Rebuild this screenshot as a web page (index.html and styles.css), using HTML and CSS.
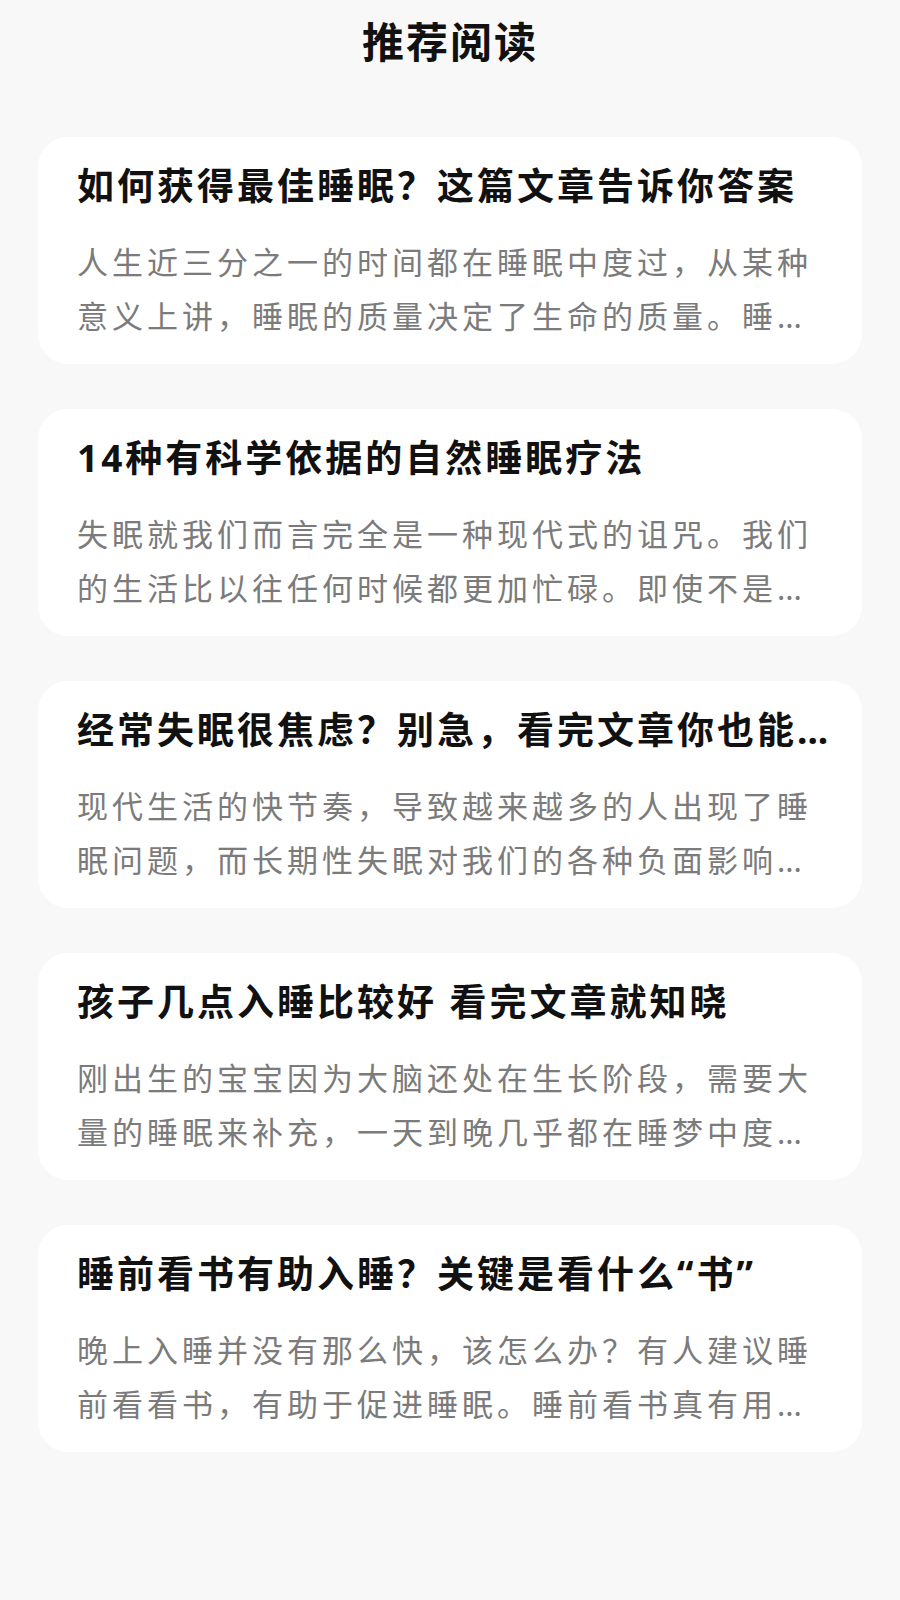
FILE: index.html
```html
<!DOCTYPE html>
<html>
<head>
	<meta charset="utf-8">
	<title>推荐阅读</title>
	<link rel="stylesheet" href="styles.css">
</head>
<body>
	<h1 class="page-title">推荐阅读</h1>
	<div class="article-list">
		<div class="article">
			<div class="article-title">如何获得最佳睡眠？这篇文章告诉你答案</div>
			<div class="article-desc">人生近三分之一的时间都在睡眠中度过，从某种意义上讲，睡眠的质量决定了生命的质量。睡<span class="dots">...</span></div>
		</div>
		<div class="article">
			<div class="article-title">14种有科学依据的自然睡眠疗法</div>
			<div class="article-desc">失眠就我们而言完全是一种现代式的诅咒。我们的生活比以往任何时候都更加忙碌。即使不是<span class="dots">...</span></div>
		</div>
		<div class="article">
			<div class="article-title">经常失眠很焦虑？别急，看完文章你也能<span class="dots">...</span></div>
			<div class="article-desc">现代生活的快节奏，导致越来越多的人出现了睡眠问题，而长期性失眠对我们的各种负面影响<span class="dots">...</span></div>
		</div>
		<div class="article">
			<div class="article-title">孩子几点入睡比较好 看完文章就知晓</div>
			<div class="article-desc">刚出生的宝宝因为大脑还处在生长阶段，需要大量的睡眠来补充，一天到晚几乎都在睡梦中度<span class="dots">...</span></div>
		</div>
		<div class="article">
			<div class="article-title">睡前看书有助入睡？关键是看什么“书”</div>
			<div class="article-desc">晚上入睡并没有那么快，该怎么办？有人建议睡前看看书，有助于促进睡眠。睡前看书真有用<span class="dots">...</span></div>
		</div>
	</div>
</body>
</html>
```

FILE: styles.css
```css
body {
	margin: 0;
	background: #f8f8f8;
	font-family: "Noto Sans", "Noto Sans CJK SC", sans-serif;
}

.page-title {
	margin: 0;
	padding-top: 14px;
	font-size: 42px;
	line-height: 56px;
	font-weight: 700;
	letter-spacing: 2px;
	text-align: center;
	color: #111;
}

.article-list {
	display: flex;
	flex-direction: column;
	gap: 45px;
	padding: 67px 38px 0;
}

.article {
	background: #fff;
	border-radius: 30px;
	padding: 24px 39px 21px;
}

.article-title {
	font-size: 37px;
	line-height: 50px;
	font-weight: 700;
	letter-spacing: 3px;
	color: #111;
	white-space: nowrap;
}

.article-desc {
	margin-top: 24px;
	font-size: 31px;
	line-height: 54px;
	letter-spacing: 4px;
	color: #7b7b7b;
}

.dots {
	letter-spacing: 0;
}
```
